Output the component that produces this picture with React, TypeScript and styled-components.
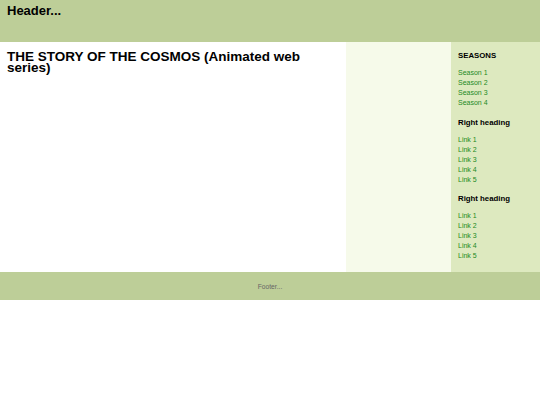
import styled, { createGlobalStyle } from "styled-components";

const GlobalStyle = createGlobalStyle`
  html, body {
    margin: 0;
    padding: 0;
    background: #fff;
    font-family: "Liberation Sans", Arial, sans-serif;
  }
`;

const Header = styled.header`
  height: 42px;
  background: #bdce98;
  padding: 5px 7px;
  box-sizing: border-box;

  h1 {
    margin: 0;
    font-size: 13px;
    line-height: 12px;
    color: #000;
  }
`;

const Main = styled.div`
  display: flex;
  height: 230px;
`;

const Content = styled.main`
  width: 346px;
  padding: 9px 7px;
  box-sizing: border-box;
  background: #fff;

  h2 {
    margin: 0;
    font-size: 13.5px;
    line-height: 11px;
    color: #000;
  }
`;

const Middle = styled.div`
  width: 105px;
  background: #f6faea;
`;

const Sidebar = styled.aside`
  flex: 1;
  background: #dde9bf;
  padding: 6px 7px;
  box-sizing: border-box;
`;

const SideHeading = styled.h3`
  margin: 2px 0 7px;
  font-size: 7.8px;
  line-height: 11px;
  color: #000;
`;

const LinkList = styled.ul`
  list-style: none;
  margin: 0 0 8.5px;
  padding: 0;

  li {
    font-size: 7px;
    line-height: 10px;
    color: #238a1e;
  }
`;

const Footer = styled.footer`
  height: 28px;
  background: #bdce98;
  display: flex;
  align-items: center;
  justify-content: center;
  font-size: 6.7px;
  color: #666;
`;

const sections = [
  { title: "SEASONS", links: ["Season 1", "Season 2", "Season 3", "Season 4"] },
  { title: "Right heading", links: ["Link 1", "Link 2", "Link 3", "Link 4", "Link 5"] },
  { title: "Right heading", links: ["Link 1", "Link 2", "Link 3", "Link 4", "Link 5"] },
];

export default function App() {
  return (
    <>
      <GlobalStyle />
      <Header>
        <h1>Header...</h1>
      </Header>
      <Main>
        <Content>
          <h2>THE STORY OF THE COSMOS (Animated web series)</h2>
        </Content>
        <Middle />
        <Sidebar>
          {sections.map((s, i) => (
            <div key={i}>
              <SideHeading>{s.title}</SideHeading>
              <LinkList>
                {s.links.map((l) => (
                  <li key={l}>{l}</li>
                ))}
              </LinkList>
            </div>
          ))}
        </Sidebar>
      </Main>
      <Footer>Footer...</Footer>
    </>
  );
}
